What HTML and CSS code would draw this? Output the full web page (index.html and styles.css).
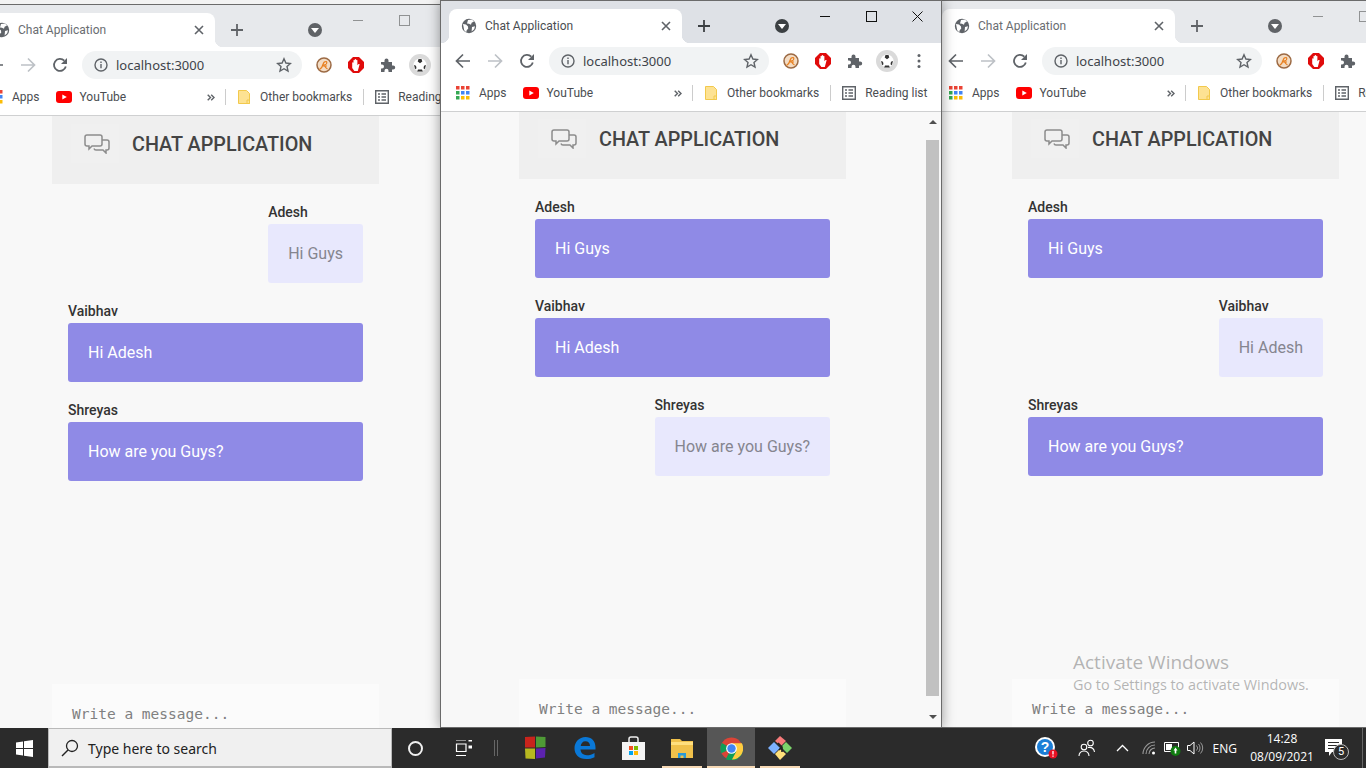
FILE: index.html
```html
<!DOCTYPE html>
<html lang="en">
<head>
  <meta charset="UTF-8">
  <title>Chat Application</title>
  <link rel="stylesheet" href="styles.css">
</head>
<body>

  <!-- Shared icons -->
  <svg class="defs" width="0" height="0">
    <symbol id="i-globe" viewBox="0 0 16 16"><circle cx="8" cy="8" r="7.2" fill="currentColor"/><path d="M2 6l3 .5 2 2 .2 2.2-1.4 1.2-.6 2.4-2-2zM7 2l4-.5 2 2-2.4 1.2-.6 2-2-1-2-.2zM11 9l3-.8-.8 3-2.6 2.4z" fill="#fff"/></symbol>
    <symbol id="i-close" viewBox="0 0 10 10"><path d="M1 1l8 8M9 1l-8 8" stroke="currentColor" stroke-width="1.6" fill="none"/></symbol>
    <symbol id="i-x" viewBox="0 0 11 11"><path d="M.5.500l10 10M10.500.500l-10 10" stroke="currentColor" fill="none"/></symbol>
    <symbol id="i-plus" viewBox="0 0 12 12"><path d="M6 0v12M0 6h12" stroke="currentColor" stroke-width="1.8"/></symbol>
    <symbol id="i-caret" viewBox="0 0 14 14"><circle cx="7" cy="7" r="7" fill="currentColor"/><path d="M3 5h8l-4 5z" fill="#fff"/></symbol>
    <symbol id="i-back" viewBox="0 0 16 16"><path d="M15 8H2M8 1.500L1.500 8 8 14.500" stroke="currentColor" stroke-width="1.700" fill="none"/></symbol>
    <symbol id="i-fwd" viewBox="0 0 16 16"><path d="M1 8h13M8 1.500L14.500 8 8 14.500" stroke="currentColor" stroke-width="1.700" fill="none"/></symbol>
    <symbol id="i-reload" viewBox="0 0 16 16"><path d="M13.800 9.500A6 6 0 1 1 12.300 3.700" stroke="currentColor" stroke-width="1.800" fill="none"/><path d="M15 1v6H9z" fill="currentColor"/></symbol>
    <symbol id="i-info" viewBox="0 0 14 14"><circle cx="7" cy="7" r="6" stroke="currentColor" stroke-width="1.400" fill="none"/><path d="M7 6v4.200M7 3.500v1.400" stroke="currentColor" stroke-width="1.400"/></symbol>
    <symbol id="i-star" viewBox="0 0 16 16"><path d="M8 1.800l1.900 4.200 4.500.5-3.400 3 1 4.500L8 11.700 4 14l1-4.500-3.400-3 4.500-.5z" stroke="currentColor" stroke-width="1.400" fill="none"/></symbol>
    <symbol id="i-runner" viewBox="0 0 16 16"><circle cx="8" cy="8" r="7" fill="#f3dcc4" stroke="#9c6a44" stroke-width="1.500"/><path d="M3.500 12.500c2-1 3-3 3.500-5 .4-2 1.500-3 3-3 1 0 1 1.500.3 2.500-.6.8-1.600 1-2.800 1M8 8c1 1.500 1.500 3 3.500 4M6 9h5" stroke="#e87f1e" stroke-width="1.200" fill="none"/></symbol>
    <symbol id="i-stop" viewBox="0 0 16 16"><path d="M5 0h6l5 5v6l-5 5H5l-5-5V5z" fill="#e00b0b"/><path d="M4.200 6c0-1 1.300-1 1.300 0V3.500c0-1 1.300-1 1.300 0V2.800c0-1 1.300-1 1.300 0v.7c0-1 1.300-1 1.300 0v4.700l.9-1c.8-.7 1.700 0 1.100.9L9.800 14H6.300L4.200 11z" fill="#fff"/></symbol>
    <symbol id="i-puzzle" viewBox="0 0 16 16"><path d="M1 5h3.500V3.500a2 2 0 0 1 4 0V5H12v3.500h1.200a2 2 0 0 1 0 4H12V15H8.500v-1.200a2 2 0 0 0-4 0V15H1v-3.500h1a2 2 0 0 0 0-4H1z" fill="currentColor"/></symbol>
    <symbol id="i-ball" viewBox="0 0 22 22"><circle cx="11" cy="11" r="11" fill="#dadada"/><circle cx="11" cy="11" r="6.500" fill="#fff"/><path d="M9.500 5l3 0 .8 2.500-2.300 1.700-2.300-1.700zM5 11l2 .8.500 2.500-1.300 1zM17 11l-2 .8-.5 2.500 1.300 1zM9 15.500h4l.8 2h-5.600z" fill="#333"/></symbol>
    <symbol id="i-dots" viewBox="0 0 4 16"><circle cx="2" cy="2.500" r="1.500" fill="currentColor"/><circle cx="2" cy="8" r="1.500" fill="currentColor"/><circle cx="2" cy="13.500" r="1.500" fill="currentColor"/></symbol>
    <symbol id="i-apps" viewBox="0 0 14 14"><path d="M0 0h3.500v3.500H0z" fill="#ea4335"/><path d="M5 0h3.500v3.500H5z" fill="#ea4335"/><path d="M10 0h3.500v3.500H10z" fill="#ea4335"/><path d="M0 5h3.500v3.500H0z" fill="#34a853"/><path d="M5 5h3.500v3.500H5z" fill="#4285f4"/><path d="M10 5h3.500v3.500H10z" fill="#4285f4"/><path d="M0 10h3.500v3.500H0z" fill="#34a853"/><path d="M5 10h3.500v3.500H5z" fill="#fbbc05"/><path d="M10 10h3.500v3.500H10z" fill="#fbbc05"/></symbol>
    <symbol id="i-yt" viewBox="0 0 16 12"><rect width="16" height="12" rx="3" fill="#f00"/><path d="M6.300 3.400v5.200L10.800 6z" fill="#fff"/></symbol>
    <symbol id="i-more" viewBox="0 0 8 7"><path d="M.7.700L3.500 3.500.7 6.300M4.200.700L7 3.500 4.200 6.300" stroke="currentColor" stroke-width="1.400" fill="none"/></symbol>
    <symbol id="i-folder" viewBox="0 0 12 14"><path d="M.5.500h8l3 3v10H.5z" fill="#fde293" stroke="#f2c94c"/><path d="M9 10h2.500v3.500H9z" fill="none" stroke="#f2c94c"/></symbol>
    <symbol id="i-list" viewBox="0 0 14 14"><path d="M.7.700h12.600v12.600H.7z" fill="none" stroke="currentColor" stroke-width="1.400"/><path d="M3 4h2M6.500 4H11M3 7h2M6.500 7H11M3 10h2M6.500 10H11" stroke="currentColor" stroke-width="1.300"/></symbol>
    <symbol id="i-chat" viewBox="0 0 26 20"><path d="M3 1h13a2 2 0 0 1 2 2v7a2 2 0 0 1-2 2H8l-3 3v-3H3a2 2 0 0 1-2-2V3a2 2 0 0 1 2-2z" fill="none" stroke="currentColor" stroke-width="1.500"/><path d="M18 6h5a2 2 0 0 1 2 2v6a2 2 0 0 1-2 2h-1v3l-3-3h-7a2 2 0 0 1-2-1.500" fill="none" stroke="currentColor" stroke-width="1.500"/></symbol>
  </svg>

  <div class="screen">
    <div class="desk">

      <!-- Left window -->
      <section class="win win-left inactive">
        <header class="titlebar">
          <div class="tab">
            <svg class="ico16"><use href="#i-globe"/></svg>
            <span class="tab-title">Chat Application</span>
            <svg class="ico-close"><use href="#i-close"/></svg>
          </div>
          <svg class="ico-plus"><use href="#i-plus"/></svg>
          <svg class="ico-caret"><use href="#i-caret"/></svg>
          <div class="win-btns"><span class="min"></span><span class="max"></span><svg class="win-x"><use href="#i-x"/></svg></div>
        </header>
        <div class="toolbar">
          <span class="slot"><svg class="ico16"><use href="#i-back"/></svg></span>
          <span class="slot dim"><svg class="ico16"><use href="#i-fwd"/></svg></span>
          <span class="slot"><svg class="ico16"><use href="#i-reload"/></svg></span>
          <div class="omnibox">
            <svg class="ico14"><use href="#i-info"/></svg>
            <span class="url">localhost:3000</span>
            <svg class="ico16 star"><use href="#i-star"/></svg>
          </div>
          <span class="slot first"><svg class="ico16"><use href="#i-runner"/></svg></span>
          <span class="slot"><svg class="ico16"><use href="#i-stop"/></svg></span>
          <span class="slot"><svg class="ico16"><use href="#i-puzzle"/></svg></span>
          <span class="slot"><svg class="ico22"><use href="#i-ball"/></svg></span>
          <span class="slot"><svg class="ico-dots"><use href="#i-dots"/></svg></span>
        </div>
        <nav class="bookmarks">
          <svg class="ico14"><use href="#i-apps"/></svg><span class="bm bm-apps">Apps</span>
          <svg class="ico-yt"><use href="#i-yt"/></svg><span class="bm bm-yt">YouTube</span>
          <svg class="ico-more"><use href="#i-more"/></svg><span class="sep"></span>
          <svg class="ico-folder"><use href="#i-folder"/></svg><span class="bm bm-other">Other bookmarks</span><span class="sep"></span>
          <svg class="ico14 list"><use href="#i-list"/></svg><span class="bm bm-read">Reading list</span>
        </nav>
        <div class="view">
          <main class="chat">
            <div class="chat-head">
              <span class="chat-ico"><svg class="ico-chat"><use href="#i-chat"/></svg></span>
              <h1>CHAT APPLICATION</h1>
            </div>
            <div class="messages">
              <div class="msg mine"><span class="who">Adesh</span><p class="bubble">Hi Guys</p></div>
              <div class="msg"><span class="who">Vaibhav</span><p class="bubble">Hi Adesh</p></div>
              <div class="msg"><span class="who">Shreyas</span><p class="bubble">How are you Guys?</p></div>
            </div>
            <div class="composer">Write a message...</div>
          </main>
          <div class="scrollbar"><span class="up"></span><span class="thumb"></span><span class="down"></span></div>
        </div>
      </section>

      <!-- Right window -->
      <section class="win win-right inactive">
        <header class="titlebar">
          <div class="tab">
            <svg class="ico16"><use href="#i-globe"/></svg>
            <span class="tab-title">Chat Application</span>
            <svg class="ico-close"><use href="#i-close"/></svg>
          </div>
          <svg class="ico-plus"><use href="#i-plus"/></svg>
          <svg class="ico-caret"><use href="#i-caret"/></svg>
          <div class="win-btns"><span class="min"></span><span class="max"></span><svg class="win-x"><use href="#i-x"/></svg></div>
        </header>
        <div class="toolbar">
          <span class="slot"><svg class="ico16"><use href="#i-back"/></svg></span>
          <span class="slot dim"><svg class="ico16"><use href="#i-fwd"/></svg></span>
          <span class="slot"><svg class="ico16"><use href="#i-reload"/></svg></span>
          <div class="omnibox">
            <svg class="ico14"><use href="#i-info"/></svg>
            <span class="url">localhost:3000</span>
            <svg class="ico16 star"><use href="#i-star"/></svg>
          </div>
          <span class="slot first"><svg class="ico16"><use href="#i-runner"/></svg></span>
          <span class="slot"><svg class="ico16"><use href="#i-stop"/></svg></span>
          <span class="slot"><svg class="ico16"><use href="#i-puzzle"/></svg></span>
          <span class="slot"><svg class="ico22"><use href="#i-ball"/></svg></span>
          <span class="slot"><svg class="ico-dots"><use href="#i-dots"/></svg></span>
        </div>
        <nav class="bookmarks">
          <svg class="ico14"><use href="#i-apps"/></svg><span class="bm bm-apps">Apps</span>
          <svg class="ico-yt"><use href="#i-yt"/></svg><span class="bm bm-yt">YouTube</span>
          <svg class="ico-more"><use href="#i-more"/></svg><span class="sep"></span>
          <svg class="ico-folder"><use href="#i-folder"/></svg><span class="bm bm-other">Other bookmarks</span><span class="sep"></span>
          <svg class="ico14 list"><use href="#i-list"/></svg><span class="bm bm-read">Reading list</span>
        </nav>
        <div class="view">
          <main class="chat">
            <div class="chat-head">
              <span class="chat-ico"><svg class="ico-chat"><use href="#i-chat"/></svg></span>
              <h1>CHAT APPLICATION</h1>
            </div>
            <div class="messages">
              <div class="msg"><span class="who">Adesh</span><p class="bubble">Hi Guys</p></div>
              <div class="msg mine"><span class="who">Vaibhav</span><p class="bubble">Hi Adesh</p></div>
              <div class="msg"><span class="who">Shreyas</span><p class="bubble">How are you Guys?</p></div>
            </div>
            <div class="composer">Write a message...</div>
          </main>
          <div class="scrollbar"><span class="up"></span><span class="thumb"></span><span class="down"></span></div>
        </div>
      </section>

      <!-- Active window -->
      <section class="win win-center">
        <header class="titlebar">
          <div class="tab">
            <svg class="ico16"><use href="#i-globe"/></svg>
            <span class="tab-title">Chat Application</span>
            <svg class="ico-close"><use href="#i-close"/></svg>
          </div>
          <svg class="ico-plus"><use href="#i-plus"/></svg>
          <svg class="ico-caret"><use href="#i-caret"/></svg>
          <div class="win-btns"><span class="min"></span><span class="max"></span><svg class="win-x"><use href="#i-x"/></svg></div>
        </header>
        <div class="toolbar">
          <span class="slot"><svg class="ico16"><use href="#i-back"/></svg></span>
          <span class="slot dim"><svg class="ico16"><use href="#i-fwd"/></svg></span>
          <span class="slot"><svg class="ico16"><use href="#i-reload"/></svg></span>
          <div class="omnibox">
            <svg class="ico14"><use href="#i-info"/></svg>
            <span class="url">localhost:3000</span>
            <svg class="ico16 star"><use href="#i-star"/></svg>
          </div>
          <span class="slot first"><svg class="ico16"><use href="#i-runner"/></svg></span>
          <span class="slot"><svg class="ico16"><use href="#i-stop"/></svg></span>
          <span class="slot"><svg class="ico16"><use href="#i-puzzle"/></svg></span>
          <span class="slot"><svg class="ico22"><use href="#i-ball"/></svg></span>
          <span class="slot"><svg class="ico-dots"><use href="#i-dots"/></svg></span>
        </div>
        <nav class="bookmarks">
          <svg class="ico14"><use href="#i-apps"/></svg><span class="bm bm-apps">Apps</span>
          <svg class="ico-yt"><use href="#i-yt"/></svg><span class="bm bm-yt">YouTube</span>
          <svg class="ico-more"><use href="#i-more"/></svg><span class="sep"></span>
          <svg class="ico-folder"><use href="#i-folder"/></svg><span class="bm bm-other">Other bookmarks</span><span class="sep"></span>
          <svg class="ico14 list"><use href="#i-list"/></svg><span class="bm bm-read">Reading list</span>
        </nav>
        <div class="view">
          <main class="chat">
            <div class="chat-head">
              <span class="chat-ico"><svg class="ico-chat"><use href="#i-chat"/></svg></span>
              <h1>CHAT APPLICATION</h1>
            </div>
            <div class="messages">
              <div class="msg"><span class="who">Adesh</span><p class="bubble">Hi Guys</p></div>
              <div class="msg"><span class="who">Vaibhav</span><p class="bubble">Hi Adesh</p></div>
              <div class="msg mine"><span class="who">Shreyas</span><p class="bubble">How are you Guys?</p></div>
            </div>
            <div class="composer">Write a message...</div>
          </main>
          <div class="scrollbar"><span class="up"></span><span class="thumb"></span><span class="down"></span></div>
        </div>
      </section>

      <div class="activate">
        <div class="activate-big">Activate Windows</div>
        <div class="activate-small">Go to Settings to activate Windows.</div>
      </div>
    </div>

    <!-- Windows taskbar -->
    <footer class="taskbar">
      <span class="start">
        <svg width="17" height="17" viewBox="0 0 17 17"><path d="M0 2.500l7-1v6.500H0zM8 1.300L17 0v8H8zM0 9h7v6.500l-7-1zM8 9h9v8l-9-1.300z" fill="#fff"/></svg>
      </span>
      <div class="search">
        <svg width="18" height="18" viewBox="0 0 18 18"><circle cx="11" cy="7" r="5.500" fill="none" stroke="#222" stroke-width="1.300"/><path d="M7 11l-6 6" stroke="#222" stroke-width="1.500"/></svg>
        <span>Type here to search</span>
      </div>
      <span class="tb-slot cortana"><i></i></span>
      <span class="tb-slot taskview">
        <svg width="17" height="16" viewBox="0 0 17 16"><path d="M1 0h10M1 15.500h10M1.500 4h9.500v7.500H1.500z" fill="none" stroke="#fff" stroke-width="1.200"/><path d="M13.500 0H17v1.500h-3.500zM13.500 5.500H17v3h-3.500z" fill="#fff"/></svg>
      </span>
      <span class="grip"></span>
      <span class="app app-blocks">
        <svg width="22" height="24" viewBox="0 0 22 24"><path d="M1 1l10-.5v11H1z" fill="#c8241c"/><path d="M12 .5l9.500.5v10l-9.500.5z" fill="#4f9a36"/><path d="M1 12.500h10V23l-9.500-.5z" fill="#b7b820"/><path d="M12 12.500l9.500-.5-.5 9.500-9 1z" fill="#5c22ae"/></svg>
      </span>
      <span class="app">
        <svg width="22" height="22" viewBox="0 0 22 22"><path d="M21.500 12.500H6.500c.3 3.600 3 5.700 6.300 5.700 2.800 0 5.400-.8 7.700-2.300v4.300c-2.400 1.300-5.100 1.800-8.400 1.800C4.700 22 .5 17.500.5 11.300.5 5 5.200 0 11.500 0c5.800 0 10 4 10 10.500zM16 9c0-3-1.800-4.800-4.600-4.800C8.700 4.200 7 6.300 6.700 9z" fill="#0a78d7"/></svg>
      </span>
      <span class="app">
        <svg width="23" height="24" viewBox="0 0 23 24"><path d="M7 6V3a2 2 0 0 1 2-2h5a2 2 0 0 1 2 2v3" fill="none" stroke="#eee" stroke-width="1.500"/><path d="M0 6h23v18H0z" fill="#f4f4f4"/><path d="M7 10h4v4H7z" fill="#f25022"/><path d="M12 10h4v4h-4z" fill="#7fba00"/><path d="M7 15h4v4H7z" fill="#00a4ef"/><path d="M12 15h4v4h-4z" fill="#ffb900"/></svg>
      </span>
      <span class="app open">
        <svg width="22" height="19" viewBox="0 0 22 19"><path d="M0 0h9l2 2h11v17H0z" fill="#f0c14b"/><path d="M0 3h22v3H0z" fill="#ffdf7e"/><path d="M7 19v-5h8v5h-2.500v-2.500h-3V19z" fill="#2b9ad6"/></svg>
      </span>
      <span class="app open active">
        <svg width="23" height="23" viewBox="0 0 24 24"><circle cx="12" cy="12" r="11.500" fill="#db4437"/><path d="M12 12L1.500 17A11.500 11.500 0 0 1 2 6.200z" fill="#0f9d58"/><path d="M12 12l-6 11A11.500 11.500 0 0 0 23.500 12z" fill="#0f9d58"/><path d="M12 6.500h10.800a11.500 11.500 0 0 1-10.300 17L17 15z" fill="#ffcd40"/><circle cx="12" cy="12" r="5.600" fill="#fff"/><circle cx="12" cy="12" r="4.400" fill="#4285f4"/></svg>
      </span>
      <span class="app open">
        <svg width="24" height="24" viewBox="0 0 24 24"><path d="M0 12l6-6 6 6-6 6z" fill="#7db1ff"/><path d="M7 5l5-5 6 5-5 5z" fill="#f77b7b"/><path d="M13 11l5-5 6 6-5 5z" fill="#7bd36b"/><path d="M7 18l5-5 6 5-6 6z" fill="#ffe07a"/><path d="M10 7l4 4v5M14 11l-3 3" stroke="#222" stroke-width="1.600" fill="none"/></svg>
      </span>
      <div class="tray">
        <span class="tray-help">
          <svg width="25" height="25" viewBox="0 0 25 25"><circle cx="11" cy="11" r="10" fill="#fff"/><circle cx="11" cy="11" r="8" fill="#1c7ed6"/><text x="11" y="16" text-anchor="middle" class="help-q">?</text><circle cx="19" cy="18" r="4.500" fill="#e81123"/><path d="M19 15v3.500M19 19.500v1.200" stroke="#fff" stroke-width="1.300"/></svg>
        </span>
        <span class="tray-people">
          <svg width="18" height="18" viewBox="0 0 18 18"><circle cx="6" cy="8" r="2.800" fill="none" stroke="#fff" stroke-width="1.100"/><circle cx="12.500" cy="4" r="2.800" fill="none" stroke="#fff" stroke-width="1.100"/><path d="M1 17c0-3 2-5 5-5s5 2 5 5M10 8.500c3.500-.5 6 1.500 6.500 4.500" fill="none" stroke="#fff" stroke-width="1.100"/></svg>
        </span>
        <span class="tray-chev">
          <svg width="13" height="8" viewBox="0 0 13 8"><path d="M1 7l5.500-5.500L12 7" fill="none" stroke="#fff" stroke-width="1.300"/></svg>
        </span>
        <span class="tray-wifi">
          <svg width="14" height="14" viewBox="0 0 14 14"><path d="M1 13A12 12 0 0 1 13 1M4 13a9 9 0 0 1 9-9M7 13a6 6 0 0 1 6-6" fill="none" stroke="#999" stroke-width="1.100"/><circle cx="11.500" cy="12" r="1.500" fill="#fff"/></svg>
        </span>
        <span class="tray-batt">
          <svg width="17" height="15" viewBox="0 0 17 15"><path d="M.5 1.500h14v9H.500z" fill="none" stroke="#fff"/><path d="M2 3h6v6H2z" fill="#fff"/><circle cx="11.500" cy="10" r="5" fill="#107c10"/><path d="M11.500 6.500l2 3h-1.200v3h-1.600v-3H9.500z" fill="#fff"/></svg>
        </span>
        <span class="tray-vol">
          <svg width="17" height="14" viewBox="0 0 17 14"><path d="M.5 4.500H3L7 1v12L3 9.500H.5z" fill="none" stroke="#fff"/><path d="M9.500 4.500a3.500 3.500 0 0 1 0 5M11.500 3a6 6 0 0 1 0 8M13.500 1.500a8 8 0 0 1 0 11" fill="none" stroke="#999"/></svg>
        </span>
        <span class="tray-lang">ENG</span>
        <span class="clock"><span>14:28</span><span>08/09/2021</span></span>
        <span class="notif">
          <svg width="18" height="18" viewBox="0 0 18 18"><path d="M0 0h17v13H7l-3 4v-4H0z" fill="#fff"/><path d="M3 3.500h11M3 6.500h11M3 9.500h8" stroke="#2b2b2b"/></svg>
          <span class="notif-count">5</span>
        </span>
        <span class="show-desk"></span>
      </div>
    </footer>
  </div>
</body>
</html>
```

FILE: styles.css
```css
* {
  box-sizing: border-box;
}
body {
  margin: 0;
  font-family: Roboto, sans-serif;
  background-color: #f3f3f3;
  overflow: hidden;
}
svg {
  display: block;
  flex: none;
}
.defs {
  position: absolute;
}
.screen {
  height: 768px;
  display: flex;
  flex-direction: column;
}
.desk {
  position: relative;
  flex: 1;
  overflow: hidden;
}

/* Browser windows */
.win {
  position: absolute;
  width: 502px;
  height: 728px;
  display: flex;
  flex-direction: column;
  background: #f8f8f8;
  border: 1px solid #6b6b6b;
}
.win-left {
  left: -27px;
  top: 4px;
  height: 729px;
}
.win-right {
  left: 933px;
  top: 0;
}
.win-center {
  left: 440px;
  top: 0;
  box-shadow: 0 0 12px rgba(0, 0, 0, 0.4);
}
.titlebar {
  height: 42px;
  flex: none;
  display: flex;
  align-items: flex-end;
  background: #dee1e6;
  color: #3c4043;
  position: relative;
}
.inactive .titlebar {
  background: #e7e9ec;
  color: #606367;
}
.tab {
  position: relative;
  width: 233px;
  height: 34px;
  margin-left: 8px;
  padding: 0 11px 0 12px;
  display: flex;
  align-items: center;
  background: white;
  border-radius: 8px 8px 0 0;
  color: #5f6368;
}
.tab::before,
.tab::after {
  content: "";
  position: absolute;
  bottom: 0;
  width: 8px;
  height: 8px;
}
.tab::before {
  left: -8px;
  background: radial-gradient(circle at 0 0, transparent 8px, white 8.5px);
}
.tab::after {
  right: -8px;
  background: radial-gradient(circle at 100% 0, transparent 8px, white 8.5px);
}
.tab-title {
  flex: 1;
  margin-left: 8px;
  font-size: 12px;
  color: #4a4d51;
}
.inactive .tab-title {
  color: #6a6d71;
}
.ico16 {
  width: 16px;
  height: 16px;
}
.ico14 {
  width: 14px;
  height: 14px;
}
.ico22 {
  width: 22px;
  height: 22px;
}
.ico-close {
  width: 10px;
  height: 10px;
}
.ico-plus {
  width: 12px;
  height: 12px;
  margin: 0 0 11px 16px;
}
.ico-caret {
  width: 14px;
  height: 14px;
  margin: 0 0 10px 65px;
}
.win-btns {
  position: absolute;
  top: 0;
  right: 0;
  display: flex;
  align-items: center;
  height: 30px;
  color: #111;
}
.min {
  width: 10px;
  border-top: 1px solid currentColor;
  margin-right: 36px;
}
.max {
  width: 11px;
  height: 11px;
  border: 1px solid currentColor;
  margin-right: 35px;
}
.win-x {
  width: 11px;
  height: 11px;
  margin-right: 18px;
}
.inactive .win-btns {
  opacity: 0.4;
}

.toolbar {
  height: 36px;
  flex: none;
  display: flex;
  align-items: center;
  padding-left: 6px;
  background: white;
  color: #5f6368;
}
.slot {
  width: 32px;
  height: 28px;
  flex: none;
  display: flex;
  align-items: center;
  justify-content: center;
}
.dim {
  color: #bdc1c6;
}
.first {
  margin-left: 6px;
}
.omnibox {
  width: 220px;
  height: 28px;
  flex: none;
  margin-left: 6px;
  padding: 0 10px 0 12px;
  display: flex;
  align-items: center;
  background: #f1f3f4;
  border-radius: 14px;
}
.url {
  flex: 1;
  margin-left: 8px;
  font-family: "Noto Sans", sans-serif;
  font-size: 13px;
  color: #40444a;
}
.star {
  color: #5f6368;
}
.ico-dots {
  width: 4px;
  height: 16px;
}

.bookmarks {
  height: 33px;
  flex: none;
  display: flex;
  align-items: center;
  padding: 0 0 4px 15px;
  background: white;
  border-bottom: 1px solid #cfd0d1;
  font-size: 12px;
  color: #4a4d51;
  white-space: nowrap;
}
.bm-apps {
  margin-left: 9px;
}
.ico-yt {
  width: 16px;
  height: 12px;
  margin-left: 16px;
}
.bm-yt {
  margin-left: 8px;
}
.ico-more {
  width: 8px;
  height: 7px;
  margin-left: 81px;
  color: #5f6368;
}
.sep {
  width: 1px;
  height: 16px;
  margin-left: 10px;
  background: #ccc;
}
.ico-folder {
  width: 12px;
  height: 14px;
  margin-left: 12px;
}
.bm-other {
  margin-left: 10px;
}
.bm-other + .sep {
  margin-left: 11px;
}
.list {
  margin-left: 11px;
  color: #5f6368;
}
.bm-read {
  margin-left: 9px;
}

/* Page inside the window */
.view {
  flex: 1;
  min-height: 0;
  display: flex;
}
.chat {
  width: 327px;
  margin-left: 78px;
  margin-right: 78px;
  display: flex;
  flex-direction: column;
}
.chat-head {
  height: 67px;
  flex: none;
  display: flex;
  background: #efefef;
}
.win-left .chat-head {
  height: 68px;
  padding-top: 1px;
}
.chat-ico {
  width: 48px;
  height: 39px;
  margin: 7px 0 0 19px;
  padding-left: 4px;
  display: flex;
  align-items: center;
  justify-content: center;
  background: #f0f0f0;
  color: #8c8c8c;
}
.ico-chat {
  width: 26px;
  height: 20px;
}
h1 {
  margin: 12px 0 0 13px;
  font-size: 19.8px;
  line-height: 32px;
  font-weight: 500;
  color: #444;
}
.messages {
  flex: 1;
  padding: 20px 16px 0;
  display: flex;
  flex-direction: column;
  gap: 20px;
}
.msg {
  display: flex;
  flex-direction: column;
  align-self: stretch;
}
.msg.mine {
  align-self: flex-end;
}
.who {
  padding-bottom: 4px;
  font-size: 14px;
  line-height: 16px;
  font-weight: 500;
  color: #333;
}
.bubble {
  margin: 0;
  padding: 20px;
  font-size: 16px;
  line-height: 19px;
  color: white;
  background: #8f8ae6;
  border-radius: 3px;
}
.mine .bubble {
  color: #85858f;
  background: #e8e8fd;
}
.composer {
  height: 48px;
  flex: none;
  padding: 22px 20px 0;
  background: #fbfbfb;
  font-family: "DejaVu Sans Mono", monospace;
  font-size: 14.5px;
  line-height: 17px;
  color: #808080;
}
.scrollbar {
  width: 17px;
  flex: none;
  display: flex;
  flex-direction: column;
  align-items: center;
  background: #f8f8f8;
}
.up,
.down {
  width: 0;
  height: 0;
  flex: none;
  border-left: 4px solid transparent;
  border-right: 4px solid transparent;
}
.up {
  margin: 8px 0 16px;
  border-bottom: 4px solid #505050;
}
.down {
  margin: 19px 0 8px;
  border-top: 4px solid #505050;
}
.thumb {
  flex: 1;
  width: 13px;
  background: #c1c1c1;
}

/* Watermark */
.activate {
  position: absolute;
  left: 1073px;
  top: 650px;
  color: rgba(110, 110, 110, 0.5);
  font-family: "Open Sans", sans-serif;
}
.activate-big {
  font-size: 19px;
  line-height: 25px;
}
.activate-small {
  font-size: 14.4px;
  line-height: 20px;
}

/* Taskbar */
.taskbar {
  height: 40px;
  flex: none;
  display: flex;
  align-items: center;
  background: #2b2b2b;
  color: white;
  position: relative;
}
.start {
  width: 48px;
  height: 40px;
  display: flex;
  align-items: center;
  justify-content: center;
}
.search {
  width: 344px;
  height: 40px;
  padding: 1px 0 0 12px;
  display: flex;
  align-items: center;
  gap: 9px;
  background: #f0f0f0;
  border: 1px solid #b9b9b9;
  border-bottom-width: 2px;
  font-family: "Noto Sans", sans-serif;
  font-size: 14px;
  color: #222;
}
.tb-slot {
  width: 48px;
  height: 40px;
  display: flex;
  align-items: center;
  justify-content: center;
}
.cortana {
  width: 47px;
}
.cortana i {
  display: block;
  width: 15px;
  height: 15px;
  border: 2px solid #f0f0f0;
  border-radius: 50%;
}
.grip {
  width: 4px;
  height: 16px;
  margin: 0 16px 0 7px;
  border-left: 1px solid #666;
  border-right: 1px solid #666;
}
.app {
  position: relative;
  width: 48px;
  height: 40px;
  display: flex;
  align-items: center;
  justify-content: center;
}
.app-blocks {
  width: 47px;
  padding-right: 6px;
}
.app.open {
  margin-left: 1px;
}
.app.active {
  background: #565656;
}
.app.open::after {
  content: "";
  position: absolute;
  left: 4px;
  right: 4px;
  bottom: 0;
  height: 2px;
  background: #f6d9b5;
}
.app.active::after {
  left: 0;
  right: 0;
}
.tray {
  margin-left: auto;
  height: 40px;
  display: flex;
  align-items: center;
}
.tray-help {
  margin-right: 19px;
}
.tray-people {
  margin-right: 20px;
}
.tray-chev {
  margin-right: 13px;
}
.tray-wifi {
  margin-right: 8px;
}
.tray-batt {
  margin-right: 6px;
}
.tray-vol {
  margin-right: 9px;
}
.tray-lang {
  font-size: 12px;
  margin-right: 14px;
  font-family: "Open Sans", sans-serif;
}
.clock {
  width: 62px;
  display: flex;
  flex-direction: column;
  align-items: center;
  font-size: 12px;
  line-height: 18px;
  font-family: "Open Sans", sans-serif;
}
.notif {
  position: relative;
  margin-left: 12px;
  margin-right: 19px;
}
.notif-count {
  position: absolute;
  left: 8px;
  top: 5px;
  width: 16px;
  height: 16px;
  border: 1px solid #bbb;
  border-radius: 50%;
  background: #2b2b2b;
  font-size: 11px;
  line-height: 14px;
  text-align: center;
}
.show-desk {
  width: 1px;
  height: 40px;
  background: #666;
  margin-right: 3px;
}
.help-q {
  font-family: "Liberation Sans", sans-serif;
  font-size: 14px;
  font-weight: bold;
  fill: white;
}
```
